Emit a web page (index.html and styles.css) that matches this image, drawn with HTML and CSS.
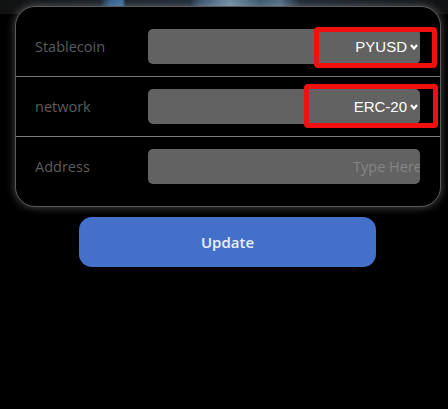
FILE: index.html
```html
<!DOCTYPE html>
<html lang="en">
<head>
  <meta charset="UTF-8" />
  <meta name="viewport" content="width=device-width, initial-scale=1.0" />
  <title>Payout Settings</title>
  <link rel="stylesheet" href="styles.css">
</head>
<body>
  <div class="backdrop"></div>

  <main class="panel">
    <!-- STABLECOIN -->
    <div class="row">
      <span class="label">Stablecoin</span>
      <div class="field">
        <div class="pick">PYUSD
          <svg class="chev" width="8" height="6" viewBox="0 0 8 6"><polyline points="1,1 4,4.5 7,1" fill="none" stroke="#fff" stroke-width="2.2"/></svg>
        </div>
        <span class="mark mark-coin"></span>
      </div>
    </div>

    <!-- NETWORK -->
    <div class="row">
      <span class="label">network</span>
      <div class="field">
        <div class="pick">ERC-20
          <svg class="chev" width="8" height="6" viewBox="0 0 8 6"><polyline points="1,1 4,4.5 7,1" fill="none" stroke="#fff" stroke-width="2.2"/></svg>
        </div>
        <span class="mark mark-net"></span>
      </div>
    </div>

    <!-- ADDRESS -->
    <div class="row">
      <span class="label">Address</span>
      <div class="field field-text">
        <span class="hint">Type Here</span>
      </div>
    </div>
  </main>

  <div class="actions">
    <button class="btn-update">Update</button>
  </div>
</body>
</html>
```

FILE: styles.css
```css
* { box-sizing: border-box; margin: 0; padding: 0; }

body {
  background: #000;
  font-family: "Open Sans", "Noto Sans", sans-serif;
  height: 409px;
  overflow: hidden;
  position: relative;
}

/* blue picture strip peeking above the panel */
.backdrop {
  position: absolute;
  top: 0; left: 0; right: 0;
  height: 14px;
  background:
    linear-gradient(90deg, transparent 0, transparent 100px, #2f5d88 110px, #3c6d9c 122px, transparent 126px,
      transparent 190px, #35546f 200px, #6d8aa3 230px, #3a566e 260px, #4d6b84 280px, transparent 300px),
    linear-gradient(90deg, #111 0, #1c2733 40%, #1c2a38 60%, #111 100%);
  z-index: -1;
}

.panel {
  margin: 6px 7px 0 15px;
  background: #000;
  border: 1px solid #5a5a5a;
  border-radius: 20px;
  padding: 10px 0;
  box-shadow: 0 0 9px rgba(200, 200, 200, 0.4);
}

.row {
  display: flex;
  align-items: center;
  padding: 12px 20px 12px 19px;
  border-bottom: 1px solid #7a7a7a;
}
.row:last-child { border-bottom: none; }

.label {
  width: 113px;
  color: #5c5c5c;
  font-size: 14.5px;
}

.field {
  flex: 1;
  height: 35px;
  background: #626262;
  border-radius: 5px;
  position: relative;
  display: flex;
  align-items: center;
  justify-content: flex-end;
}

.pick {
  font-family: "Liberation Sans", Arial, sans-serif;
  font-size: 15px;
  color: #fff;
  padding-right: 2px;
  display: flex;
  align-items: center;
  gap: 3px;
}
.chev { margin-top: 1px; }

/* red annotation boxes */
.mark {
  position: absolute;
  border: 5px solid #f01010;
  border-radius: 4px;
}
.mark-coin { left: 166px; right: -17px; top: -2px; bottom: -4px; }
.mark-net  { left: 156px; right: -18px; top: -5px; bottom: -4px; }

.field-text { overflow: hidden; }
.hint {
  color: #858585;
  font-size: 14.5px;
  margin-right: -2px;
  white-space: nowrap;
}

.actions {
  display: flex;
  justify-content: center;
  margin-top: 10px;
  padding-left: 7px;
}

.btn-update {
  width: 297px;
  height: 50px;
  background: #4570c9;
  color: #eaf2ff;
  border: none;
  border-radius: 13px;
  font-family: "Open Sans", "Noto Sans", sans-serif;
  font-size: 15px;
  font-weight: 600;
  cursor: pointer;
}
```
